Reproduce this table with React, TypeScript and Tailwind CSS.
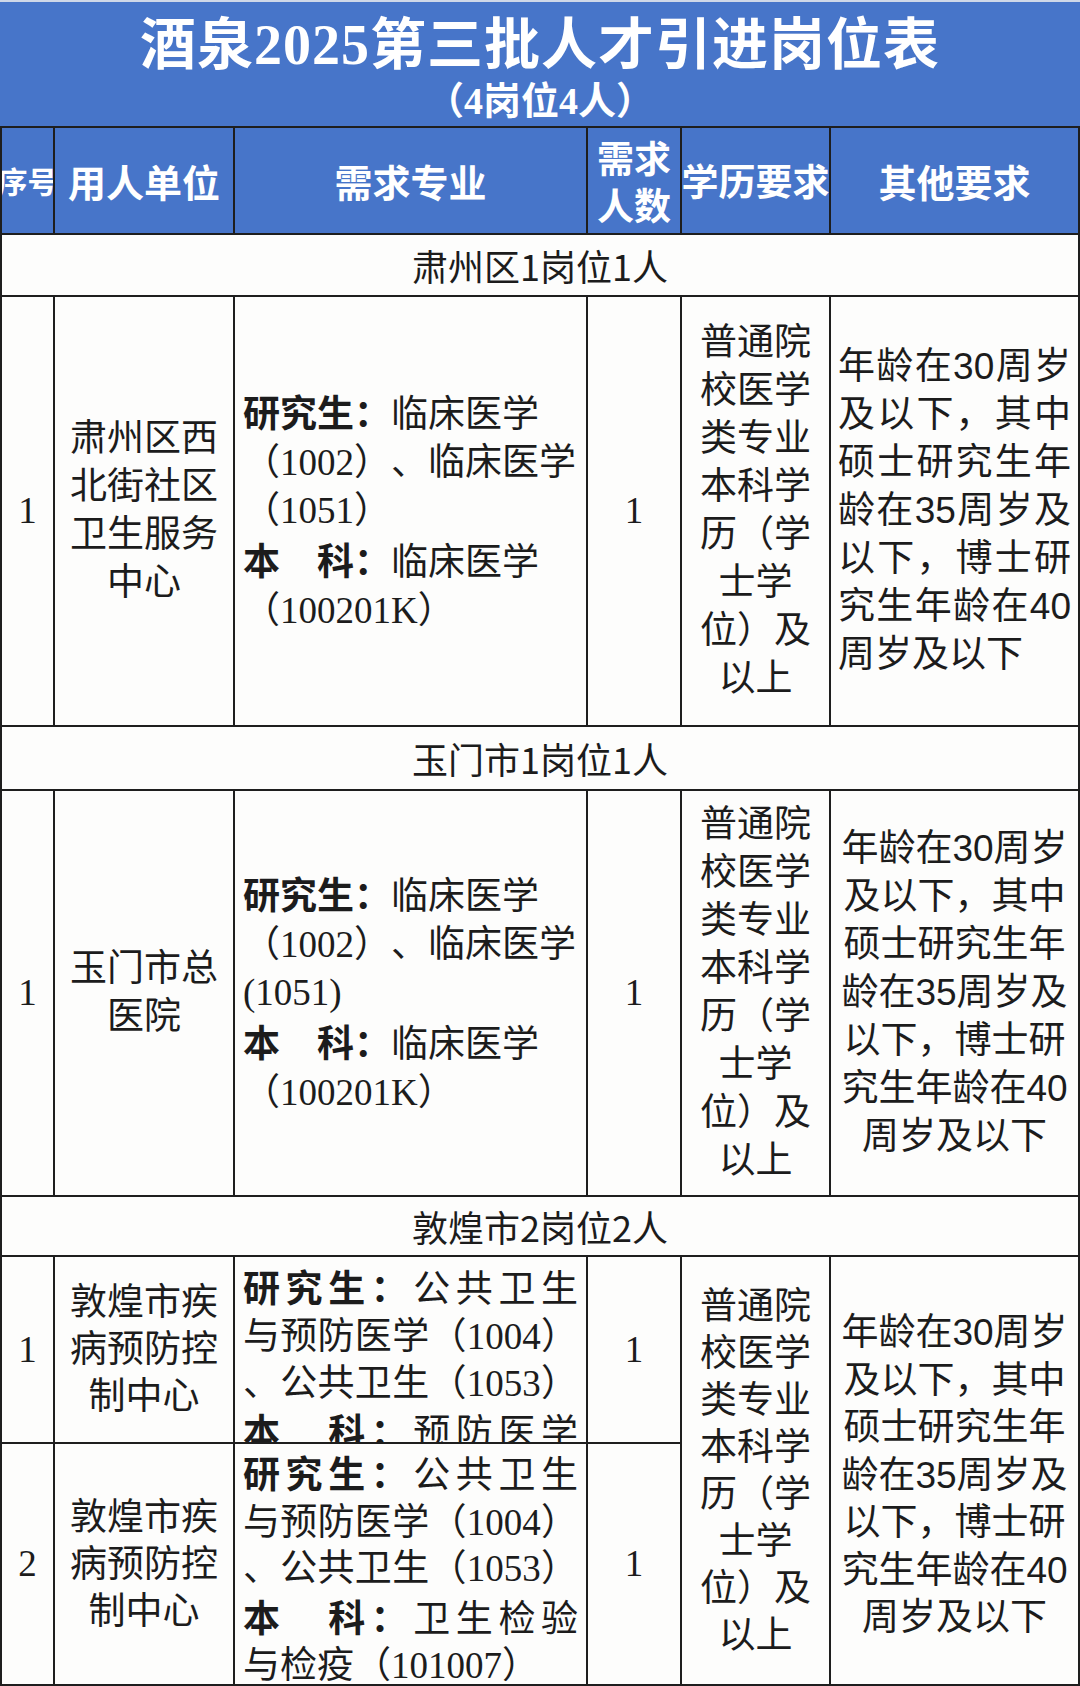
import React from "react";

const BF = "font-['Liberation_Serif','Noto_Sans_CJK_SC',serif]";
const SF = "font-['Noto_Sans_CJK_SC',sans-serif]";
const AF = "font-['Liberation_Sans','Noto_Sans_CJK_SC',sans-serif]";
const CELL = "bg-[#fdfdfc] text-[#1c1c1c] flex items-center justify-center overflow-hidden";
const HEAD = "bg-[#4775c9] text-white flex items-center justify-center overflow-hidden font-['Noto_Sans_CJK_SC',sans-serif] font-bold";

function B({ children }: { children: React.ReactNode }) {
  return <span className={`${SF} font-bold`}>{children}</span>;
}

function Section({ text }: { text: string }) {
  return (
    <div className={`${CELL} col-span-6 ${SF} text-[36px] leading-[48px]`}>{text}</div>
  );
}

function Num({ n }: { n: string }) {
  return <div className={`${CELL} ${BF} text-[37px]`}>{n}</div>;
}

function Centered({ lines, lh = "leading-[48px]" }: { lines: string[]; lh?: string }) {
  return (
    <div className={`${CELL} ${BF} text-[37px] ${lh} text-center`}>
      <div>
        {lines.map((l, i) => (
          <div key={i} className="whitespace-nowrap">
            {l}
          </div>
        ))}
      </div>
    </div>
  );
}

const eduLines = ["普通院", "校医学", "类专业", "本科学", "历（学", "士学", "位）及", "以上"];
const otherLines = [
  "年龄在30周岁",
  "及以下，其中",
  "硕士研究生年",
  "龄在35周岁及",
  "以下，博士研",
  "究生年龄在40",
  "周岁及以下",
];

function OtherJustified() {
  return (
    <div className={`${CELL} ${AF} text-[37px] leading-[48px] justify-stretch px-[7px]`}>
      <div className="w-full">
        {otherLines.map((l, i) => (
          <div
            key={i}
            className={i < otherLines.length - 1 ? "text-justify [text-align-last:justify]" : "text-left"}
          >
            {l}
          </div>
        ))}
      </div>
    </div>
  );
}

function OtherCentered({ lh = "leading-[48px]", extra = "" }: { lh?: string; extra?: string }) {
  return (
    <div className={`${CELL} ${AF} text-[37px] ${lh} text-center ${extra}`}>
      <div>
        {otherLines.map((l, i) => (
          <div key={i} className="whitespace-nowrap">
            {l}
          </div>
        ))}
      </div>
    </div>
  );
}

function MajorClinical({ paren }: { paren: string }) {
  return (
    <div className={`${CELL} ${BF} text-[37px] leading-[48px] justify-start pl-2 pr-0`}>
      <div>
        <div className="whitespace-nowrap">
          <B>研究生：</B>临床医学
        </div>
        <div className="whitespace-nowrap">（1002）、临床医学</div>
        <div className="whitespace-nowrap">{paren}</div>
        <div className="whitespace-nowrap">
          <B>本　科：</B>临床医学
        </div>
        <div className="whitespace-nowrap">（100201K）</div>
      </div>
    </div>
  );
}

function JLine({ children, last = false }: { children: React.ReactNode; last?: boolean }) {
  return (
    <div className={last ? "text-left whitespace-nowrap" : "text-justify [text-align-last:justify]"}>
      {children}
    </div>
  );
}

export default function App() {
  return (
    <div className="w-[1080px] h-[1686px] overflow-hidden bg-white [text-spacing-trim:space-all] [text-autospace:no-autospace]">
      {/* Title block */}
      <div className="h-[126px] bg-[#4775c9] border-t-[2px] border-[#cfd8e8] flex flex-col items-center text-white">
        <div className={`${BF} font-bold text-[56px] leading-[60px] mt-[13px] tracking-[1px]`}>
          酒泉2025第三批人才引进岗位表
        </div>
        <div className={`${BF} font-bold text-[38px] leading-[44px] mt-[4px]`}>（4岗位4人）</div>
      </div>

      {/* Table */}
      <div className="grid grid-cols-[51px_178px_351px_92px_147px_247px] grid-rows-[105px_60px_428px_62px_404px_58px_185px_240px] gap-[2px] p-[2px] bg-[#1e1e1e]">
        {/* Header */}
        <div className={`${HEAD} text-[30px] whitespace-nowrap`}>
          <span className="whitespace-nowrap">序号</span>
        </div>
        <div className={`${HEAD} text-[38px]`}>用人单位</div>
        <div className={`${HEAD} text-[38px]`}>需求专业</div>
        <div className={`${HEAD} text-[37px] leading-[47px] text-center`}>
          <div>
            <div>需求</div>
            <div>人数</div>
          </div>
        </div>
        <div className={`${HEAD} text-[37px] whitespace-nowrap`}>
          <span className="whitespace-nowrap">学历要求</span>
        </div>
        <div className={`${HEAD} text-[38px]`}>其他要求</div>

        {/* 肃州区 */}
        <Section text="肃州区1岗位1人" />
        <Num n="1" />
        <Centered lines={["肃州区西", "北街社区", "卫生服务", "中心"]} />
        <MajorClinical paren="（1051）" />
        <Num n="1" />
        <Centered lines={eduLines} />
        <OtherJustified />

        {/* 玉门市 */}
        <Section text="玉门市1岗位1人" />
        <Num n="1" />
        <Centered lines={["玉门市总", "医院"]} />
        <MajorClinical paren="(1051)" />
        <Num n="1" />
        <Centered lines={eduLines} />
        <OtherCentered />

        {/* 敦煌市 */}
        <Section text="敦煌市2岗位2人" />
        <Num n="1" />
        <Centered lines={["敦煌市疾", "病预防控", "制中心"]} lh="leading-[47px]" />
        <div className={`${CELL} ${BF} text-[37px] leading-[47px] items-start justify-stretch pt-[6px] px-2`}>
          <div className="w-full">
            <JLine>
              <B>研究生：</B>公共卫生
            </JLine>
            <JLine>与预防医学（1004）</JLine>
            <JLine>、公共卫生（1053）</JLine>
            <JLine>
              <B>本　科：</B>预防医学
            </JLine>
          </div>
        </div>
        <Num n="1" />
        <div className={`${CELL} ${BF} text-[37px] leading-[47px] text-center row-span-2`}>
          <div>
            {eduLines.map((l, i) => (
              <div key={i} className="whitespace-nowrap">
                {l}
              </div>
            ))}
          </div>
        </div>
        <div className="row-span-2 flex">
          <div className="flex-1 flex">
            <OtherCentered lh="leading-[47.5px]" extra="flex-1 pt-[10px]" />
          </div>
        </div>

        <Num n="2" />
        <Centered lines={["敦煌市疾", "病预防控", "制中心"]} lh="leading-[47px]" />
        <div className={`${CELL} ${BF} text-[37px] leading-[46.5px] items-start justify-stretch pt-[5px] px-2`}>
          <div className="w-full">
            <JLine>
              <B>研究生：</B>公共卫生
            </JLine>
            <JLine>与预防医学（1004）</JLine>
            <JLine>、公共卫生（1053）</JLine>
            <JLine>
              <B>本　科：</B>卫生检验
            </JLine>
            <JLine last>与检疫（101007）</JLine>
          </div>
        </div>
        <Num n="1" />
      </div>
    </div>
  );
}
